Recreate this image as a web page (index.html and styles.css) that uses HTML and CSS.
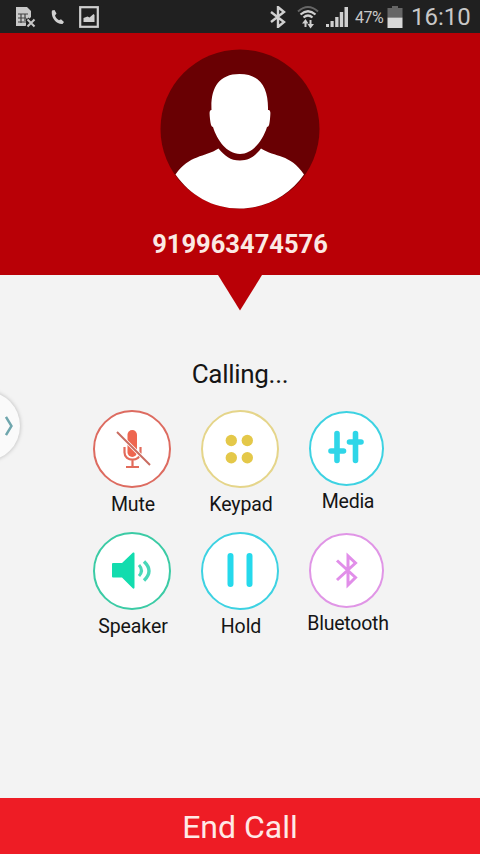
FILE: index.html
```
<!DOCTYPE html>
<html lang="en">
<head>
    <meta charset="UTF-8">
    <meta name="viewport" content="width=device-width, initial-scale=1.0">
    <title>Calling</title>
    <link rel="stylesheet" href="styles.css">
</head>
<body>

<div class="phone">
    <div class="status-bar">
        <div class="status-left">
            <svg width="22" height="22" viewBox="0 0 22 22">
                <path d="M1 1h11l4 4v6l-3 3-2-2v8H1z" fill="#c9c9c9"/>
                <path d="M3 8h10M3 12h8M3 16h8M6 8v9M10 8v7" stroke="#444" stroke-width="1.200" fill="none"/>
                <path d="M12 13l8 8M20 13l-8 8" stroke="#222" stroke-width="4"/>
                <path d="M12.500 13.500l7 7M19.500 13.500l-7 7" stroke="#c9c9c9" stroke-width="2"/>
            </svg>
            <svg class="phone-icon" width="14" height="16" viewBox="0 0 14 16">
                <path d="M1 1.500L3.500 1l2 3.500L4 6.500c.7 2 2 3.700 4 4.800l2-1 3 2.700-1.500 2C5 15.500-.5 8 1 1.500z" fill="#d0d0d0"/>
            </svg>
            <svg class="picture-icon" width="20" height="22" viewBox="0 0 20 22">
                <rect x="1.200" y="1.200" width="17.600" height="19.600" fill="none" stroke="#cfcfcf" stroke-width="2.200"/>
                <path d="M4.500 16v-4l4-1.500 2 1 4-3.500 1 1v7z" fill="#cfcfcf"/>
            </svg>
        </div>
        <div class="status-right">
            <svg width="18" height="22" viewBox="0 0 18 22">
                <path d="M2 6l13 10-6 5V1l6 5L2 16" fill="none" stroke="#d0d0d0" stroke-width="2.400"/>
            </svg>
            <svg class="wifi-icon" width="22" height="24" viewBox="0 0 22 24">
                <path d="M1 6.500Q11-2.500 21 6.500" fill="none" stroke="#666" stroke-width="2"/>
                <path d="M3.500 9.500Q11 3 18.500 9.500M6.500 12.500Q11 8.500 15.500 12.500" fill="none" stroke="#d0d0d0" stroke-width="2.200"/>
                <path d="M8.500 22v-6M13.500 15v6" stroke="#d0d0d0" stroke-width="2"/>
                <path d="M5 18.500l3.500-4.500 3 4.500zM10.500 19l3 4.500 3.500-4.500z" fill="#d0d0d0"/>
            </svg>
            <svg class="signal-icon" width="22" height="22" viewBox="0 0 22 22">
                <path d="M0 21v-3h3v3zM4.500 21v-6h3.200v6zM9.200 21V11h3.300v10zM13.800 21V6h3.400v15zM18.500 21V1H22v20z" fill="#d0d0d0"/>
            </svg>
            <span class="percent">47%</span>
            <svg class="battery-icon" width="16" height="22" viewBox="0 0 16 22">
                <path d="M5 0h6v2h4.500v9.500H.5V2H5z" fill="#666"/>
                <path d="M.5 11.500h15V22H.5z" fill="#d8d8d8"/>
            </svg>
            <span class="clock">16:10</span>
        </div>
    </div>

    <div class="caller">
        <svg class="avatar" width="160" height="160" viewBox="0 0 160 160">
            <circle cx="80" cy="80" r="79.500" fill="#690003"/>
            <path d="M51.500 61C50.500 40 58 25 79.500 25s29 15 28.500 36c3-.5 2.500 3 2 9-.5 5-1 8-3 8-4 13-14 27-27 27S57 91 53 78c-2 0-2.500-4-3-8-.5-5-1-9 1.500-9z" fill="#fff"/>
            <path d="M58.500 99.500C65 107 70 111.500 80 111.500s15-4.500 21-12c14 9 29 5 43 26-14 20-37 34-64.500 34S30 146 15.500 125.500c14-20 29-17 43-26z" fill="#fff"/>
        </svg>
        <div class="number">919963474576</div>
    </div>
    <svg class="arrow" width="44" height="36" viewBox="0 0 44 36">
        <path d="M0 0h44L22 35.500z" fill="#b90006"/>
    </svg>

    <div class="calling">Calling...</div>

    <div class="controls">
        <div class="control">
            <div class="circle mute">
                <svg width="74" height="74" viewBox="2 2 74 74">
                    <rect x="34.500" y="20" width="9.500" height="27" rx="4.700" fill="#ee6650"/>
                    <path d="M31.500 37v5.500c0 9.500 16 9.500 16 0V37M39.500 50v7M33 57h13" fill="none" stroke="#e26b5b" stroke-width="2.200"/>
                    <path d="M24 22l33 33" stroke="#fff" stroke-width="3.600"/>
                    <path d="M24 22l33 33" stroke="#c96b60" stroke-width="2"/>
                </svg>
            </div>
            <div class="label">Mute</div>
        </div>
        <div class="control">
            <div class="circle keypad">
                <svg width="74" height="74" viewBox="2 2 74 74" fill="#e4c849">
                    <circle cx="30.300" cy="30.500" r="5.700"/>
                    <circle cx="46.300" cy="30.500" r="5.700"/>
                    <circle cx="30.300" cy="47.700" r="5.700"/>
                    <circle cx="46.300" cy="47.700" r="5.700"/>
                </svg>
            </div>
            <div class="label">Keypad</div>
        </div>
        <div class="control">
            <div class="circle small media">
                <svg width="71" height="71" viewBox="2 2 71 71" fill="none" stroke="#2fd6e8" stroke-linecap="round">
                    <path d="M28 22.500v27M46.500 22.500v27" stroke-width="5.600"/>
                    <path d="M22 40h12.500M40.500 31H52" stroke-width="5.600"/>
                </svg>
            </div>
            <div class="label">Media</div>
        </div>
        <div class="control">
            <div class="circle speaker">
                <svg width="74" height="74" viewBox="2 2 74 74">
                    <path d="M20 31h9l11-10.500q1.500-.5 1.500 1v34q0 1.500-1.500 1L29 45.500h-9q-1 0-1-1V32q0-1 1-1z" fill="#12dcae"/>
                    <path d="M46 33q5 5.500 0 11" fill="none" stroke="#48d7b8" stroke-width="3"/>
                    <path d="M51 29.500q10 9.500 0 19" fill="none" stroke="#48d7b8" stroke-width="3.400"/>
                </svg>
            </div>
            <div class="label">Speaker</div>
        </div>
        <div class="control">
            <div class="circle hold">
                <svg width="74" height="74" viewBox="2 2 74 74">
                    <path d="M29.500 24v28M48.500 24v28" stroke="#25d9ec" stroke-width="6" stroke-linecap="round"/>
                </svg>
            </div>
            <div class="label">Hold</div>
        </div>
        <div class="control">
            <div class="circle small bluetooth">
                <svg width="71" height="71" viewBox="2 2 71 71">
                    <path d="M28 27.500l18.500 17L39 52V23l7.500 7L28 47" fill="none" stroke="#e18ee9" stroke-width="3"/>
                </svg>
            </div>
            <div class="label">Bluetooth</div>
        </div>
    </div>

    <div class="end-call">End Call</div>

    <!-- edge panel handle -->
    <div class="handle">
        <svg width="8" height="20" viewBox="0 0 8 20">
            <path d="M1 1l5.500 9L1 19" fill="none" stroke="#6fa6ad" stroke-width="2.400"/>
        </svg>
    </div>
</div>

</body>
</html>
```
FILE: styles.css
```
body {
    margin: 0;
    font-family: Roboto, sans-serif;
    background: #f3f3f3;
}
.phone {
    position: relative;
    display: flex;
    flex-direction: column;
    align-items: center;
    width: 480px;
    height: 854px;
    overflow: hidden;
    background: #f3f3f3;
    color: #151515;
}
svg {
    display: block;
}
.status-bar {
    display: flex;
    justify-content: space-between;
    box-sizing: border-box;
    width: 100%;
    height: 33px;
    padding: 6px 10px 0 15px;
    background: #202020;
    color: #c8c8c8;
}
.status-left, .status-right {
    display: flex;
    height: 22px;
    align-items: center;
}
.phone-icon {
    margin-left: 14px;
}
.picture-icon {
    margin-left: 14px;
}
.wifi-icon {
    margin-left: 10px;
}
.signal-icon {
    margin-left: 7px;
}
.percent {
    width: 29px;
    margin-left: 7px;
    font-size: 16px;
    letter-spacing: -0.5px;
}
.battery-icon {
    margin-left: 3px;
}
.clock {
    width: 59px;
    margin-left: 8px;
    font-size: 24px;
    white-space: nowrap;
}
.caller {
    display: flex;
    flex-direction: column;
    align-items: center;
    box-sizing: border-box;
    width: 100%;
    height: 242px;
    padding-top: 16px;
    background: #b90006;
}
.number {
    margin-top: 20px;
    font-size: 25.5px;
    line-height: 30px;
    font-weight: 700;
    color: #fbe9e4;
}
.arrow {
    flex: none;
}
.calling {
    height: 32px;
    margin-top: 47px;
    font-size: 26px;
    line-height: 32px;
    letter-spacing: -0.3px;
}
.controls {
    display: grid;
    grid-template-columns: repeat(3, 108px);
    grid-auto-rows: 122px;
    margin-top: 20px;
}
.control {
    display: flex;
    flex-direction: column;
    align-items: center;
}
.circle {
    box-sizing: border-box;
    width: 78px;
    height: 78px;
    border: 2px solid;
    border-radius: 50%;
    background: #fff;
}
.small {
    width: 75px;
    height: 75px;
    margin: 1px 3px 0 0;
}
.mute {
    border-color: #dd6b60;
}
.keypad {
    border-color: #e5d58a;
}
.media, .hold {
    border-color: #3dd2e2;
}
.speaker {
    border-color: #3bcba5;
}
.bluetooth {
    border-color: #e095e6;
}
.label {
    margin-top: 5px;
    padding-left: 2px;
    font-size: 19.5px;
    line-height: 24px;
    letter-spacing: -0.1px;
}
.small + .label {
    margin-top: 4px;
    padding-left: 0;
    letter-spacing: -0.25px;
}
.end-call {
    width: 100%;
    height: 56px;
    margin-top: auto;
    background: #ee1c25;
    color: #ffe9e6;
    font-size: 32px;
    line-height: 58px;
    text-align: center;
}
.handle {
    position: absolute;
    left: -50px;
    top: 391px;
    display: flex;
    justify-content: flex-end;
    align-items: center;
    box-sizing: border-box;
    width: 70px;
    height: 70px;
    padding-right: 7px;
    border-radius: 50%;
    background: #fafafa;
    box-shadow: 0 0 4px rgba(0, 0, 0, 0.25);
}
```
